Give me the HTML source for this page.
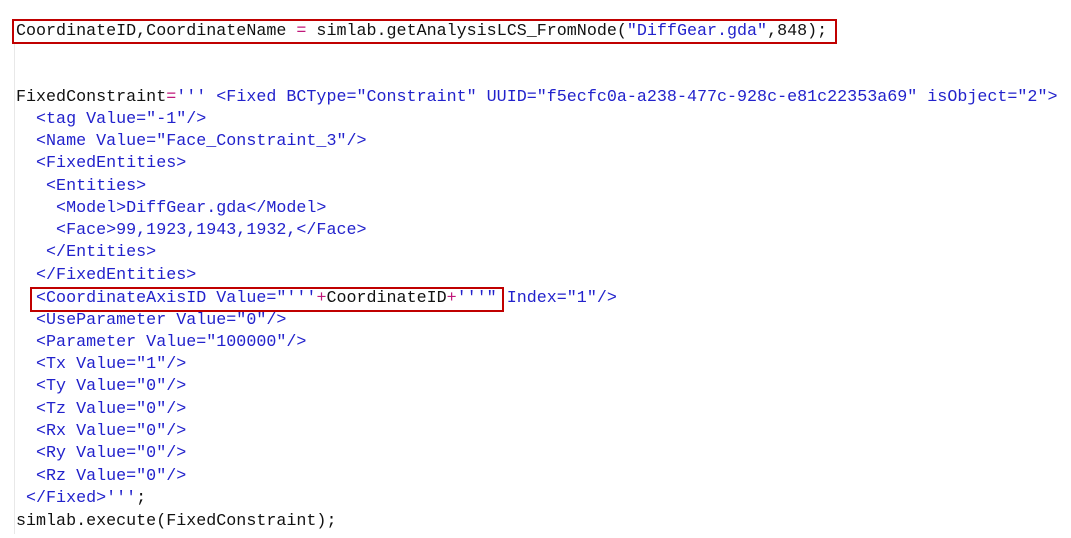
<html><head><style>
body{margin:0;width:1071px;height:538px;background:#fff;overflow:hidden;position:relative;font-family:"Liberation Mono",monospace;font-size:16.7px;color:#111}
.l{position:absolute;left:16px;height:22px;line-height:22px;white-space:pre}
.b{color:#2222cc}.m{color:#c0187a}
.box{position:absolute;border:2px solid #c00000}
.vl{position:absolute;left:14px;top:44px;width:1px;height:490px;background:#e8e8e8}
</style></head><body>
<div class="vl"></div>
<div class="box" style="left:12px;top:19px;width:821px;height:21px"></div>
<div class="box" style="left:30px;top:287px;width:470px;height:21px"></div>
<div class="l" style="top:21px">CoordinateID,CoordinateName <span class="m">=</span> simlab.getAnalysisLCS_FromNode(<span class="b">"DiffGear.gda"</span>,848);</div>
<div class="l" style="top:87px">FixedConstraint<span class="m">=</span><span class="b">''' &lt;Fixed BCType="Constraint" UUID="f5ecfc0a-a238-477c-928c-e81c22353a69" isObject="2"&gt;</span></div>
<div class="l b" style="top:109px">  &lt;tag Value="-1"/&gt;</div>
<div class="l b" style="top:131px">  &lt;Name Value="Face_Constraint_3"/&gt;</div>
<div class="l b" style="top:153px">  &lt;FixedEntities&gt;</div>
<div class="l b" style="top:176px">   &lt;Entities&gt;</div>
<div class="l b" style="top:198px">    &lt;Model&gt;DiffGear.gda&lt;/Model&gt;</div>
<div class="l b" style="top:220px">    &lt;Face&gt;99,1923,1943,1932,&lt;/Face&gt;</div>
<div class="l b" style="top:242px">   &lt;/Entities&gt;</div>
<div class="l b" style="top:265px">  &lt;/FixedEntities&gt;</div>
<div class="l" style="top:288px"><span class="b">  &lt;CoordinateAxisID Value="'''</span><span class="m">+</span>CoordinateID<span class="m">+</span><span class="b">'''" Index="1"/&gt;</span></div>
<div class="l b" style="top:310px">  &lt;UseParameter Value="0"/&gt;</div>
<div class="l b" style="top:332px">  &lt;Parameter Value="100000"/&gt;</div>
<div class="l b" style="top:354px">  &lt;Tx Value="1"/&gt;</div>
<div class="l b" style="top:376px">  &lt;Ty Value="0"/&gt;</div>
<div class="l b" style="top:399px">  &lt;Tz Value="0"/&gt;</div>
<div class="l b" style="top:421px">  &lt;Rx Value="0"/&gt;</div>
<div class="l b" style="top:443px">  &lt;Ry Value="0"/&gt;</div>
<div class="l b" style="top:466px">  &lt;Rz Value="0"/&gt;</div>
<div class="l b" style="top:488px"> &lt;/Fixed&gt;'''<span style="color:#111">;</span></div>
<div class="l" style="top:511px">simlab.execute(FixedConstraint);</div>
</body></html>
